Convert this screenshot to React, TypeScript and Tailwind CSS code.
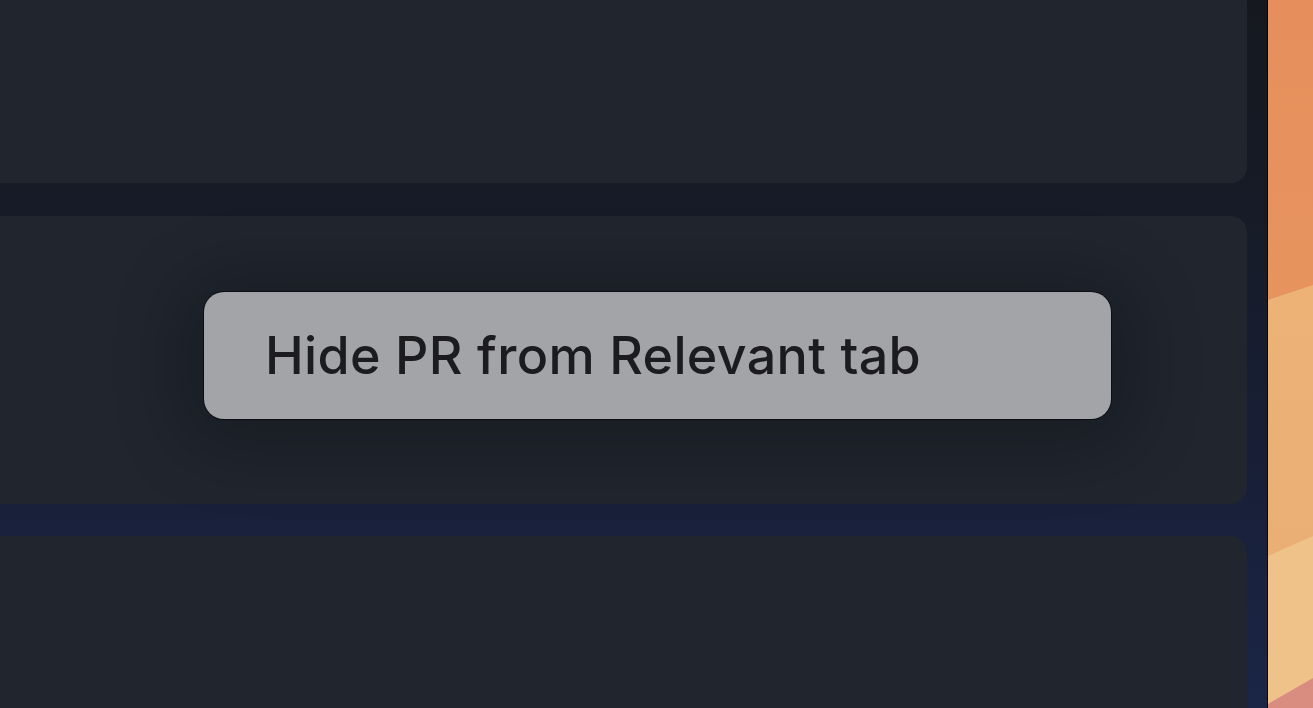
export default function App() {
  return (
    <div className="flex h-[708px] w-[1313px] overflow-hidden font-['Inter','Noto_Sans',sans-serif]">
      {/* app window */}
      <div className="relative flex w-[1268px] shrink-0 flex-col border-r border-black/70 bg-[linear-gradient(180deg,#15181f_0%,#161b27_30%,#18203a_72%,#1b2646_100%)] pr-[20px]">
        <div className="h-[183px] shrink-0 rounded-br-2xl bg-[#20252e]" />
        <div className="relative mt-[33px] h-[288px] shrink-0 rounded-r-2xl bg-[#20252e]">
          {/* tooltip */}
          <div className="absolute left-[204px] top-[76px] flex h-[127px] w-[907px] items-center rounded-[20px] bg-[#a3a4a8] pl-[61px] shadow-[0_0_0_1px_rgba(0,0,0,0.55),0_8px_70px_18px_rgba(0,0,0,0.25)]">
            <span className="text-[52px] font-medium leading-none tracking-[0.35px] text-[#1c1c1f]">
              Hide PR from Relevant tab
            </span>
          </div>
        </div>
        <div className="mt-[32px] flex-1 rounded-tr-2xl bg-[#20252e]" />
      </div>

      {/* desktop wallpaper */}
      <div className="flex-1">
        <svg width="45" height="708" viewBox="0 0 45 708" className="block">
          <defs>
            <linearGradient id="o1" x1="0" y1="0" x2="0" y2="1">
              <stop offset="0" stopColor="#e68f5c" />
              <stop offset="1" stopColor="#ea9a62" />
            </linearGradient>
            <linearGradient id="o2" x1="0" y1="0" x2="0" y2="1">
              <stop offset="0" stopColor="#ecb276" />
              <stop offset="1" stopColor="#e9ad73" />
            </linearGradient>
          </defs>
          <rect x="0" y="0" width="45" height="708" fill="url(#o1)" />
          <polygon points="0,300 45,285 45,708 0,708" fill="url(#o2)" />
          <polygon points="0,556 45,536 45,708 0,708" fill="#efc289" />
          <polygon points="0,704 45,678 45,708 0,708" fill="#d98c80" />
        </svg>
      </div>
    </div>
  );
}
